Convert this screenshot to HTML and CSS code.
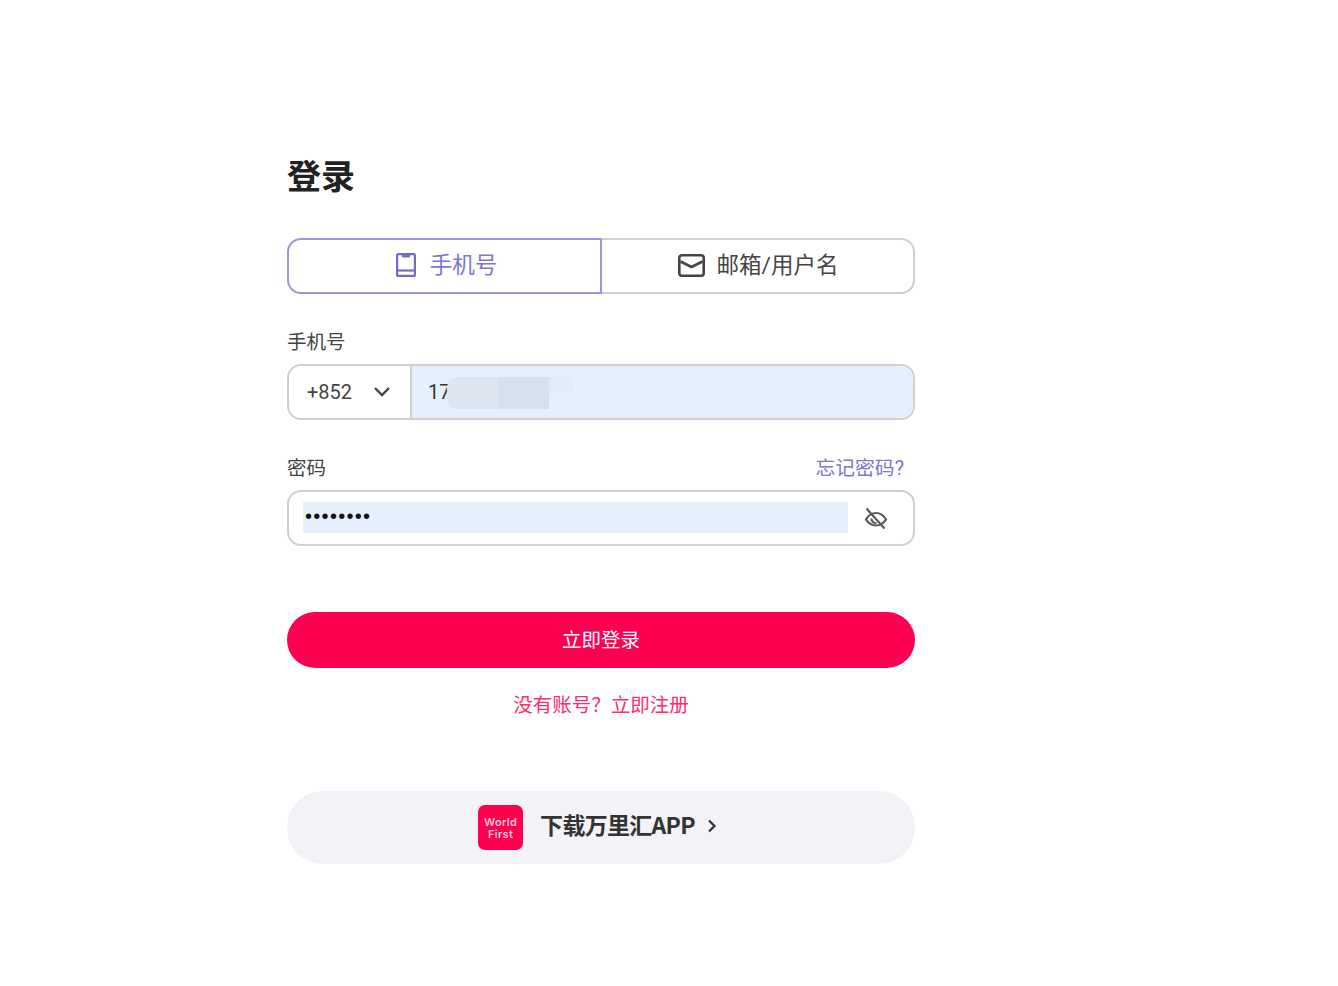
FILE: index.html
```html
<!DOCTYPE html>
<html lang="zh-CN">
<head>
<meta charset="utf-8">
<title>登录</title>
<link rel="stylesheet" href="styles.css">
</head>
<body>
<main class="login">
  <h1 class="title">登录</h1>
  <div class="tabs">
    <div class="tab tab-active">
      <svg class="tab-icon" viewBox="0 0 20 24" width="20" height="24" fill="none" stroke="#6f6cc7" stroke-width="2.2"><rect x="1.1" y="1.1" width="17.8" height="21.8" rx="1.5"/><path d="M1 17.5h18"/><path d="M6 1h8v2.5a1 1 0 0 1-1 1H7a1 1 0 0 1-1-1z" fill="#6f6cc7" stroke="none"/></svg>
      <span>手机号</span>
    </div>
    <div class="tab tab-mail">
      <svg class="tab-icon" viewBox="0 0 27 23" width="27" height="23" fill="none" stroke="#444" stroke-width="2.6"><rect x="1.3" y="1.3" width="24.4" height="20.4" rx="2.5"/><path d="M2.5 7.5l11 5.5 11-5.5"/></svg>
      <span>邮箱/用户名</span>
    </div>
  </div>

  <div class="label-row phone-label"><label class="label">手机号</label></div>
  <div class="field phone-field">
    <div class="code">
      <span>+852</span>
      <svg viewBox="0 0 18 12" width="18" height="12" fill="none" stroke="#444" stroke-width="2.4"><path d="M2 2l7 7 7-7"/></svg>
    </div>
    <div class="phone-value">
      <span>17</span>
      <div class="mask mask-a"></div>
      <div class="mask mask-b"></div>
      <div class="mask mask-c"></div>
    </div>
  </div>

  <div class="label-row password-label">
    <label class="label">密码</label>
    <a class="forgot">忘记密码?</a>
  </div>
  <div class="field password-field">
    <div class="dots">••••••••</div>
    <svg class="eye" viewBox="0 0 24 23" width="24" height="23" fill="none" stroke="#5a5a5a" stroke-width="2.2"><path d="M2 12.5c2.500-4.500 6-6.500 10-6.500s7.500 2 10 6.500c-2.500 4-6 6-10 6s-7.500-2-10-6z"/><path d="M7.500 11.500c0 2.500 2 4.500 5 5"/><path d="M2.500 1.500l18 20"/></svg>
  </div>

  <button class="submit">立即登录</button>
  <a class="register">没有账号？立即注册</a>

  <div class="app">
    <div class="app-logo"><span>World</span><span>First</span></div>
    <span class="app-text">下载万里汇APP</span>
    <svg class="app-arrow" viewBox="0 0 10 14" width="10" height="14" fill="none" stroke="#333" stroke-width="2.200"><path d="M2 1.500l5.500 5.500-5.500 5.500"/></svg>
  </div>
</main>
</body>
</html>
```
FILE: styles.css
```css
* { box-sizing: border-box; }
html, body { margin: 0; padding: 0; background: #fff; }
body {
  min-height: 986px;
  font-family: Roboto, "Noto Sans CJK SC", sans-serif;
  color: #333;
  overflow: hidden;
}
.login {
  width: 628px;
  margin-left: 287px;
  padding-top: 154px;
  display: flex;
  flex-direction: column;
}
.title {
  margin: 0;
  height: 42px;
  line-height: 42px;
  font-size: 34px;
  font-weight: 700;
  color: #222;
  font-family: "Noto Sans CJK SC", sans-serif;
}
.tabs {
  margin-top: 42px;
  height: 56px;
  display: flex;
}
.tab {
  display: flex;
  align-items: center;
  justify-content: center;
  gap: 14px;
  font-size: 22.5px;
  color: #444;
  border: 2px solid #cfcfcf;
  border-left: 0;
  border-radius: 0 14px 14px 0;
  padding-bottom: 6px;
}
.tab-active {
  flex: 0 0 315px;
  color: #7a77cc;
  border: 2px solid #9a97dc;
  border-radius: 14px 0 0 14px;
  padding-left: 4px;
}
.tab-mail { flex: 1; gap: 12px; padding-left: 1px; }
.tab-icon { flex: none; margin-top: 4px; }
.label-row {
  height: 24px;
  display: flex;
  justify-content: space-between;
  align-items: center;
}
.phone-label { margin-top: 34px; }
.password-label { margin-top: 34px; }
.label { font-size: 19.5px; color: #444; }
.forgot { font-size: 19.8px; color: #7a77cc; margin-right: 11px; }
.field {
  margin-top: 12px;
  height: 56px;
  border: 2px solid #cfcfcf;
  border-radius: 14px;
  display: flex;
  overflow: hidden;
}
.code {
  width: 123px;
  display: flex;
  align-items: center;
  gap: 21px;
  padding-left: 18px;
  font-size: 20px;
  color: #444;
  border-right: 2px solid #cfcfcf;
}
.phone-value {
  flex: 1;
  position: relative;
  background: #e6effc;
  display: flex;
  align-items: center;
  padding-left: 16px;
  font-size: 20px;
  color: #333;
}
.mask { position: absolute; }
.mask-a { left: 35px; top: 11px; width: 52px; height: 32px; background: #dde5f1; border-radius: 10px 0 0 10px; }
.mask-b { left: 87px; top: 11px; width: 50px; height: 32px; background: #d7e0ed; }
.mask-c { left: 137px; top: 11px; width: 24px; height: 16px; background: #e2ebf8; }
.password-field {
  align-items: center;
  padding-left: 14px;
}
.dots {
  width: 545px;
  height: 31px;
  margin-top: -1px;
  background: #e6effc;
  color: #111;
  font-size: 20px;
  line-height: 28px;
  letter-spacing: 1.3px;
  padding-left: 2px;
  font-family: "Liberation Sans", sans-serif;
}
.eye { margin-left: 16px; flex: none; }
.submit {
  margin-top: 66px;
  height: 56px;
  border: 0;
  border-radius: 28px;
  background: #ff0050;
  color: #fff;
  font-size: 19.5px;
  font-family: "Noto Sans CJK SC", sans-serif;
  padding: 0 0 4px;
}
.register {
  margin-top: 24px;
  height: 28px;
  line-height: 28px;
  text-align: center;
  font-size: 19.5px;
  color: #ff2d6c;
}
.app {
  margin-top: 71px;
  height: 73px;
  border-radius: 36px;
  background: #f2f2f7;
  display: flex;
  align-items: center;
  justify-content: center;
  gap: 12px;
  padding-right: 7px;
}
.app-logo {
  width: 45px;
  height: 45px;
  border-radius: 7px;
  background: #ff0050;
  color: #ffc9d9;
  display: flex;
  flex-direction: column;
  align-items: center;
  justify-content: center;
  font-size: 11px;
  line-height: 12px;
  font-weight: 600;
  letter-spacing: 0.3px;
  font-family: Inter, sans-serif;
  margin-right: 5px;
}
.app-text {
  font-size: 23px;
  font-weight: 700;
  color: #333;
  font-family: "Noto Sans CJK SC", sans-serif;
  letter-spacing: -0.7px;
  margin-top: -7px;
}
.app-arrow { margin-top: -3px; }
```
